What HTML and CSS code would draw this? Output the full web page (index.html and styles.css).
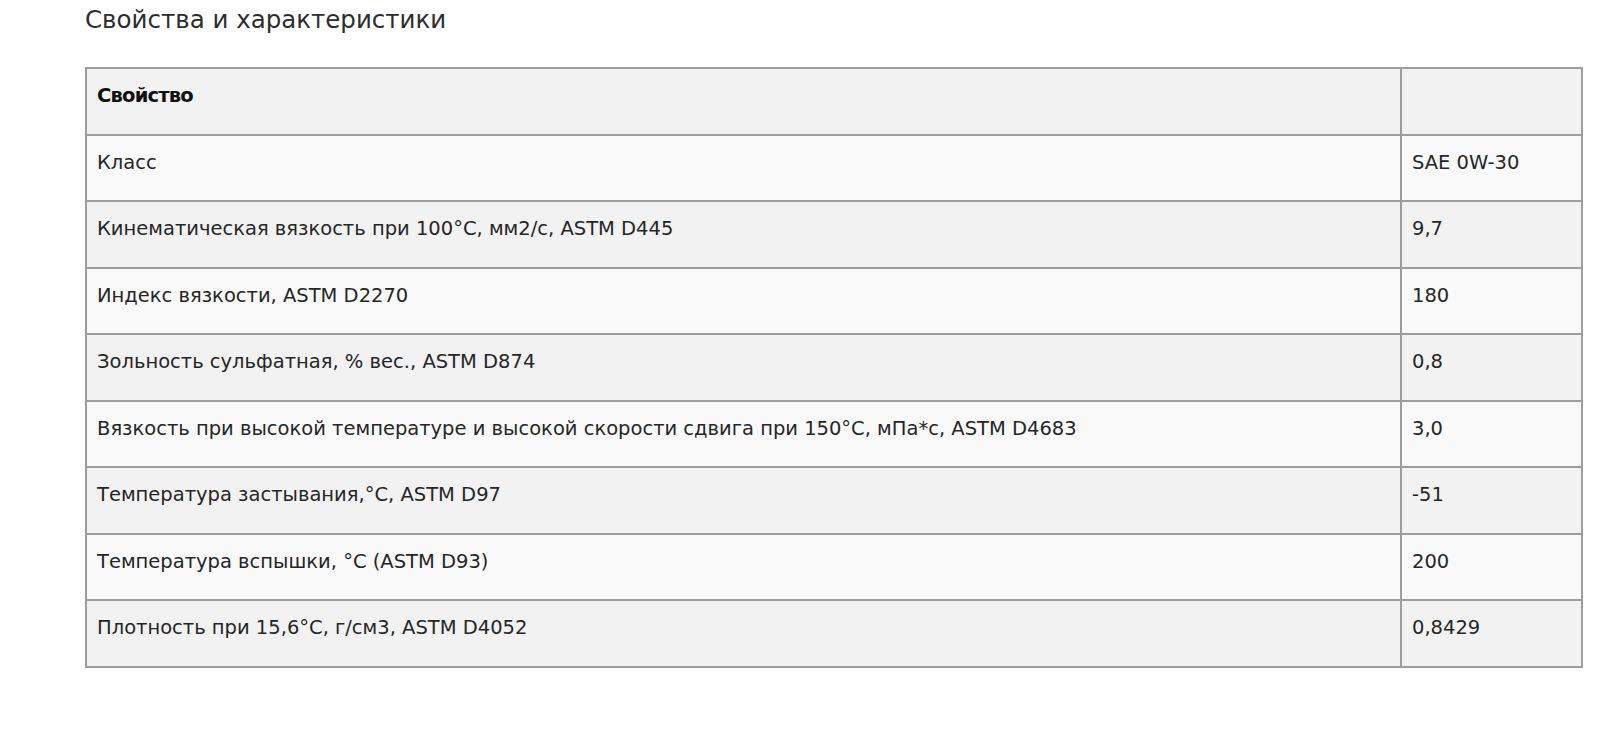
FILE: index.html
```html
<!DOCTYPE html>
<html lang="ru">
<head>
<meta charset="utf-8">
<title>Свойства и характеристики</title>
<link rel="stylesheet" href="styles.css">
</head>
<body>
<main class="page">
  <h2 class="section-title">Свойства и характеристики</h2>
  <table class="props">
    <thead>
      <tr><th class="col-name">Свойство</th><th class="col-value"></th></tr>
    </thead>
    <tbody>
      <tr><td>Класс</td><td>SAE 0W-30</td></tr>
      <tr><td>Кинематическая вязкость при 100°C, мм2/с, ASTM D445</td><td>9,7</td></tr>
      <tr><td>Индекс вязкости, ASTM D2270</td><td>180</td></tr>
      <tr><td>Зольность сульфатная, % вес., ASTM D874</td><td>0,8</td></tr>
      <tr><td>Вязкость при высокой температуре и высокой скорости сдвига при 150°C, мПа*с, ASTM D4683</td><td>3,0</td></tr>
      <tr><td>Температура застывания,°C, ASTM D97</td><td>-51</td></tr>
      <tr><td>Температура вспышки, °C (ASTM D93)</td><td>200</td></tr>
      <tr><td>Плотность при 15,6°C, г/см3, ASTM D4052</td><td>0,8429</td></tr>
    </tbody>
  </table>
  <h2 class="section-title next">Соответствие стандартам и одобрения</h2>
</main>
</body>
</html>
```

FILE: styles.css
```css
html, body {
  margin: 0;
  padding: 0;
  background: #ffffff;
}

body {
  font-family: "DejaVu Sans", "Open Sans", sans-serif;
  color: #262626;
}

.page {
  padding: 0 17px 0 85px;
}

.section-title {
  margin: 0;
  padding-top: 4px;
  font-size: 24.5px;
  line-height: 32px;
  font-weight: 400;
  color: #2d2d2d;
  letter-spacing: 0;
}

.props {
  margin-top: 31px;
  width: 1498px;
  border-collapse: collapse;
  font-size: 19.5px;
  line-height: 28px;
}

.props th,
.props td {
  border: 2px solid #9d9d9d;
  padding: 13px 10px 23.5px;
  text-align: left;
  vertical-align: top;
}

.props th {
  font-weight: 700;
  color: #111111;
  letter-spacing: -0.8px;
  background: #f2f2f2;
}

.col-value {
  width: 159px;
}

.props tbody tr:nth-child(odd) {
  background: #f9f9f9;
}

.props tbody tr:nth-child(even) {
  background: #f2f2f2;
}

.section-title.next {
  margin-top: 88px;
}
```
